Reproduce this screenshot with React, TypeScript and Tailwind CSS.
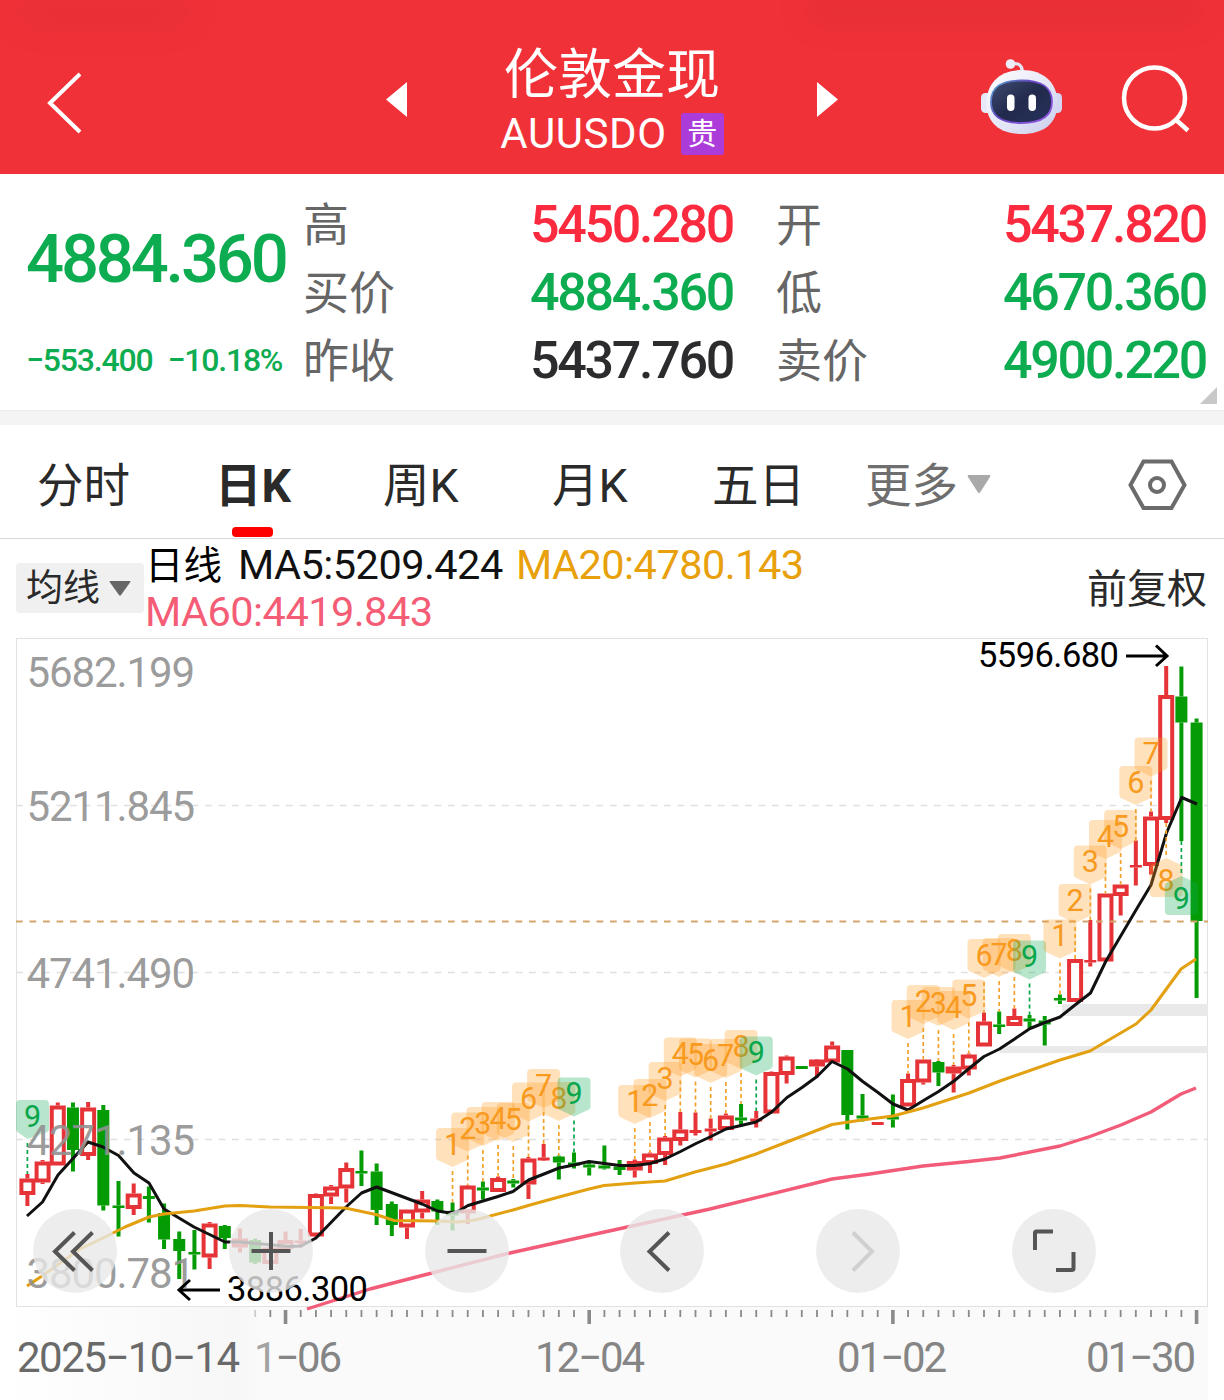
type Candle = [kind: 'r' | 'g', high: number, top: number, bottom: number, low: number];
type Point = [x: number, y: number];

const STEP = 15.184;
const FIRST_X = 27.4;
const candleX = (i: number) => FIRST_X + i * STEP;

const RED = '#e53337';
const GREEN = '#049b04';

const candles: Candle[] = [
  ['r', 1174, 1178.5, 1195, 1206],
  ['r', 1160, 1161.5, 1182.5, 1184],
  ['r', 1102.5, 1105.5, 1165.5, 1165.5],
  ['g', 1102.5, 1107.5, 1150, 1171.5],
  ['r', 1102, 1107.5, 1156, 1160],
  ['g', 1105, 1110, 1205.5, 1210.5],
  ['g', 1181, 1205.5, 1208, 1236.5],
  ['r', 1183.5, 1193.5, 1209, 1215],
  ['g', 1186.5, 1196, 1199, 1222.5],
  ['g', 1203.5, 1213, 1239.5, 1249],
  ['g', 1231.5, 1239, 1251, 1279],
  ['g', 1230, 1252, 1254.5, 1269.5],
  ['r', 1222, 1223.5, 1257.5, 1269],
  ['g', 1225, 1226, 1238, 1249],
  ['r', 1228.5, 1238.5, 1247.5, 1252.5],
  ['g', 1238.5, 1240, 1262.5, 1264],
  ['r', 1245, 1247.5, 1264, 1264],
  ['r', 1231.5, 1240, 1249, 1251.5],
  ['r', 1229, 1240.5, 1243, 1247.5],
  ['r', 1193.5, 1194, 1236.5, 1237],
  ['r', 1185, 1186.5, 1196.5, 1204],
  ['r', 1162.5, 1168, 1188.5, 1202.5],
  ['g', 1150.5, 1171, 1173.5, 1186],
  ['g', 1163.5, 1171.5, 1210, 1225],
  ['g', 1201.5, 1204, 1225, 1236],
  ['r', 1209.5, 1209.5, 1227.5, 1239],
  ['r', 1191, 1199.5, 1212.5, 1218.5],
  ['g', 1199.5, 1201, 1211.5, 1225],
  ['g', 1202.5, 1212.5, 1215.5, 1230.5],
  ['r', 1185, 1185.5, 1213.5, 1224],
  ['g', 1181.5, 1187.5, 1190.5, 1199.5],
  ['r', 1176.5, 1178, 1192, 1192],
  ['g', 1179, 1180.5, 1183.5, 1187.5],
  ['r', 1157, 1158.5, 1184.5, 1199],
  ['r', 1144, 1157.5, 1160.5, 1161],
  ['g', 1155.5, 1156.5, 1162.5, 1179.5],
  ['g', 1152.5, 1162.5, 1165.5, 1168.5],
  ['g', 1163, 1164.5, 1167.5, 1175.5],
  ['g', 1145.5, 1165.5, 1168.5, 1169.5],
  ['g', 1160, 1166.5, 1170, 1175],
  ['r', 1159.5, 1161, 1170.5, 1177.5],
  ['r', 1152.5, 1153.5, 1164, 1173],
  ['r', 1136, 1137.5, 1155, 1165],
  ['r', 1112, 1129.5, 1141, 1145.5],
  ['r', 1112.5, 1130, 1133, 1135.5],
  ['r', 1118.5, 1128.5, 1131.5, 1140.5],
  ['r', 1113.5, 1115.5, 1130, 1130],
  ['g', 1104, 1117.5, 1120.5, 1126.5],
  ['r', 1111, 1118.5, 1121.5, 1127.5],
  ['r', 1071.5, 1072, 1113.5, 1113.5],
  ['r', 1055.5, 1056.5, 1075, 1083.5],
  ['g', 1066, 1066, 1069, 1069],
  ['r', 1059, 1059.5, 1066.5, 1077.5],
  ['r', 1041.5, 1045.5, 1062.5, 1062.5],
  ['g', 1050, 1050, 1115, 1129.5],
  ['g', 1094, 1115.5, 1118.5, 1121.5],
  ['r', 1122, 1122, 1125, 1125],
  ['g', 1094.5, 1116.5, 1119.5, 1127.5],
  ['r', 1073.5, 1079, 1106.5, 1106.5],
  ['r', 1059.5, 1059.5, 1082.5, 1084.5],
  ['g', 1061, 1062, 1072.5, 1086],
  ['r', 1065, 1066.5, 1073.5, 1092.5],
  ['r', 1053.5, 1054.5, 1069.5, 1075.5],
  ['r', 1012.5, 1021.5, 1046.5, 1046.5],
  ['g', 1011.5, 1024.5, 1027, 1034],
  ['r', 1008.5, 1016, 1026, 1026],
  ['g', 1015, 1018.5, 1021.5, 1028.5],
  ['g', 1016, 1020.5, 1024.5, 1045.5],
  ['g', 994.5, 998, 1000.5, 1004],
  ['r', 959, 959, 1002, 1002],
  ['r', 920, 960, 962.5, 966.5],
  ['r', 893.5, 893.5, 961.5, 961.5],
  ['r', 884.5, 884.5, 896, 915.5],
  ['r', 840.5, 865, 867.5, 885.5],
  ['r', 811.5, 816.5, 866, 874.5],
  ['r', 666, 695, 820, 823],
  ['g', 666.5, 696.5, 722.5, 841],
  ['g', 718.5, 722.5, 921, 998],
];

const ma5: Point[] = [
  [27, 1216], [42.5, 1202], [58, 1175], [88, 1142], [103, 1147], [118.5, 1155.5], [134, 1173], [149, 1183],
  [164, 1209], [194, 1227], [225, 1242], [240, 1242], [262, 1244], [290, 1246.5], [301, 1246], [316, 1238],
  [346, 1207], [361.5, 1193], [376.7, 1187], [422, 1204], [437.5, 1211], [447, 1212.5], [457, 1212], [468, 1205.5],
  [498, 1196.5], [513, 1191.5], [528.6, 1180], [544, 1174], [559, 1168], [574, 1165], [589, 1161.5],
  [619.7, 1165.5], [635, 1165.5], [650, 1163.5], [665, 1159], [680.5, 1151.5], [696, 1143.5], [711, 1136.5],
  [726, 1129], [741, 1125.5], [756, 1122], [771.7, 1112], [787, 1097.5], [802, 1087.5], [817, 1076.5],
  [832, 1061.5], [847.6, 1069], [862.7, 1081.5], [878, 1092.5], [893, 1104], [908, 1110], [923.5, 1100.5],
  [938.6, 1091.5], [954, 1081], [969, 1068.5], [984, 1056.5], [999.5, 1049], [1014.6, 1039], [1030, 1028.5],
  [1045, 1022.5], [1060, 1017], [1075, 1005], [1090.5, 993], [1105.7, 961.5], [1121, 935.5], [1136, 910],
  [1151, 885], [1166.5, 833], [1181.7, 797.5], [1197, 804],
];

const ma20: Point[] = [
  [27, 1286], [42, 1276], [80, 1249], [103, 1238], [125, 1227], [149, 1217], [164, 1214], [194, 1211], [225, 1206],
  [240, 1205.5], [270, 1207], [310, 1207.5], [345, 1208], [376, 1214.5], [394, 1220.5], [437, 1221], [459, 1222],
  [475, 1220], [513, 1210], [530, 1205], [559, 1197], [589, 1189], [604, 1185.5], [635, 1183], [665, 1181],
  [695, 1172], [726, 1164], [756, 1154], [787, 1142], [832, 1124.5], [862, 1120], [893, 1116], [923, 1108],
  [969, 1093], [1000, 1081], [1060, 1060], [1090, 1051], [1136, 1024], [1151, 1010], [1181, 969], [1196, 959],
];

const ma60: Point[] = [
  [307, 1309], [370, 1289], [430, 1273.5], [510, 1253], [600, 1233], [710, 1209], [832, 1179], [870, 1174],
  [923, 1166], [969, 1161.5], [1000, 1158], [1060, 1146], [1090, 1136.5], [1121, 1125], [1151, 1112],
  [1181, 1094], [1196, 1088],
];

// [candle index, digit, top of the tag]
const tags: [number, number, number][] = [
  [28, 1, 1128], [29, 2, 1112.5], [30, 3, 1107], [31, 4, 1102], [32, 5, 1103], [33, 6, 1082.5], [34, 7, 1069],
  [35, 8, 1082], [36, 9, 1077.5],
  [40, 1, 1085], [41, 2, 1079], [42, 3, 1062], [43, 4, 1037.5], [44, 5, 1038.5], [45, 6, 1044], [46, 7, 1039],
  [47, 8, 1030], [48, 9, 1036.5],
  [58, 1, 1000], [59, 2, 985], [60, 3, 987], [61, 4, 991], [62, 5, 979.5], [63, 6, 939], [64, 7, 938],
  [65, 8, 934], [66, 9, 940.5],
  [68, 1, 919.5], [69, 2, 884], [70, 3, 845.5], [71, 4, 820], [72, 5, 810], [73, 6, 766], [74, 7, 737.5],
];

const priceLabels = [
  { text: '5682.199', y: 687 },
  { text: '5211.845', y: 820.5 },
  { text: '4741.490', y: 987.5 },
  { text: '4271.135', y: 1154.5 },
  { text: '3800.781', y: 1287.5 },
];

const toPoints = (pts: Point[]) => pts.map((p) => p.join(',')).join(' ');

function CandleShape({ index, data }: { index: number; data: Candle }) {
  const [kind, high, top, bottom, low] = data;
  const x = candleX(index);
  const color = kind === 'r' ? RED : GREEN;
  const hollow = kind === 'r' && bottom - top > 5;

  return (
    <g>
      {top > high && <rect x={x - 2} y={high} width={4} height={top - high} fill={color} />}
      {low > bottom && <rect x={x - 2} y={bottom} width={4} height={low - bottom} fill={color} />}
      {hollow ? (
        <rect x={x - 6} y={top + 2} width={12} height={bottom - top - 4} fill="#fff" stroke={color} strokeWidth={4} />
      ) : (
        <rect x={x - 6} y={top} width={12} height={bottom - top} fill={color} />
      )}
    </g>
  );
}

interface TagProps {
  x: number;
  digit: number;
  top: number;
  target: number;
  inverted?: boolean;
  // the first tag is pushed right so that it stays inside the frame
  shift?: number;
}

function Tag({ x, digit, top, target, inverted, shift = 0 }: TagProps) {
  const last = digit === 9;
  const fill = last ? '#12ab58' : '#ff9a20';
  const textColor = last ? '#0aa64b' : '#f79a1e';
  const cx = x + shift;
  const shape = inverted
    ? `M${cx} ${top} l15 7 q1.500 1 1.500 3 v25 q0 4-4 4 h-25 q-4 0-4-4 v-25 q0-2 1.500-3z`
    : `M${cx - 12.5} ${top} h25 q4 0 4 4 v25 q0 2-1.500 3 L${x} ${top + 39} L${cx - 15} ${top + 32} q-1.500-1-1.500-3 v-25 q0-4 4-4z`;

  return (
    <g>
      <line
        x1={x}
        x2={x}
        y1={inverted ? target : top + 43}
        y2={inverted ? top : target}
        stroke={last ? '#0aa64b' : '#f2a22c'}
        strokeWidth={1.7}
        strokeDasharray="4 3"
      />
      <path d={shape} fill={fill} fillOpacity={0.3} />
      <text x={cx} y={inverted ? top + 33 : top + 26.5} textAnchor="middle" fontSize={30.5} fill={textColor}>
        {digit}
      </text>
    </g>
  );
}

function Chart() {
  return (
    <svg className="block overflow-visible" width={1224} height={762} viewBox="0 638 1224 762" fontFamily="Roboto, 'Noto Sans CJK SC', sans-serif">
      <defs>
        <linearGradient id="fade" x1="0" x2="1" y1="0" y2="0">
          <stop offset="0" stopColor="#fff" />
          <stop offset="0.9" stopColor="#f7f7f7" />
          <stop offset="1" stopColor="#fafafa" />
        </linearGradient>
      </defs>
      <rect x={0} y={1307} width={1208} height={93} fill="#fafafa" />
      <rect x={0} y={1307} width={262} height={93} fill="url(#fade)" />
      <rect x={16.5} y={638.5} width={1191} height={668} fill="#fff" stroke="#e2e2e2" />
      {[805.5, 972.5, 1139.5].map((y) => (
        <line key={y} x1={16} x2={1208} y1={y} y2={y} stroke="#e0e0e0" strokeWidth={1.3} strokeDasharray="6.75 6.75" />
      ))}
      <rect x={1062} y={1004} width={146} height={12} fill="#e9e9e9" />
      <rect x={1000} y={1046} width={208} height={7} fill="#e9e9e9" />

      {candles.map((c, i) => (
        <CandleShape key={i} index={i} data={c} />
      ))}
      <line x1={16} x2={1208} y1={921.5} y2={921.5} stroke="#d3a56c" strokeWidth={2} strokeDasharray="6.75 6.75" />

      <g fill="none" strokeWidth={3} strokeLinejoin="round">
        <polyline points={toPoints(ma60)} stroke="#f25c78" strokeWidth={3.4} />
        <polyline points={toPoints(ma5)} stroke="#111" />
        <polyline points={toPoints(ma20)} stroke="#e3a010" />
      </g>

      <Tag x={candleX(0)} digit={9} top={1100} target={1174} shift={5.1} />
      {tags.map(([i, digit, top]) => (
        <Tag key={i} x={candleX(i)} digit={digit} top={top} target={candles[i][1]} />
      ))}
      <Tag x={candleX(75)} digit={8} top={858} target={823} inverted />
      <Tag x={candleX(76)} digit={9} top={876} target={841} inverted />

      <g fontSize={42} fill="#929292" fillOpacity={0.92}>
        {priceLabels.map((l) => (
          <text key={l.text} x={26.5} y={l.y} textLength={168.5}>
            {l.text}
          </text>
        ))}
      </g>

      <g fontSize={34.5} fill="#000">
        <text x={978} y={667} textLength={141}>5596.680</text>
        <text x={227} y={1301} textLength={141}>3886.300</text>
      </g>
      <g fill="none" stroke="#000" strokeWidth={3}>
        <path d="M1126 656 H1166 M1156 645.500 L1167 656 L1156 666" />
        <path d="M220 1290 H180 M190 1280 L179 1290 L190 1300" />
      </g>

      {/* time axis */}
      {Array.from({ length: 63 }, (_, k) => k + 15).map((i) => {
        const major = (i - 17) % 20 === 0;
        return (
          <rect
            key={i}
            x={candleX(i) - (major ? 1.8 : 0.9)}
            y={1310}
            width={major ? 3.6 : 1.8}
            height={major ? 14 : 7}
            fill="#8a8a8a"
            opacity={i === 15 ? 0.4 : 1}
          />
        );
      })}
      <g fontSize={42} fill="#858585">
        <text x={254} y={1372} textLength={88}>
          <tspan fill="#a2a2a2">1</tspan>−06
        </text>
        <text x={535} y={1372} textLength={110}>12−04</text>
        <text x={837} y={1372} textLength={110}>01−02</text>
        <text x={1086} y={1372} textLength={110}>01−30</text>
        <text x={17} y={1372} textLength={223} fill="#6a6a6a">2025−10−14</text>
      </g>
    </svg>
  );
}

const controls = [
  { id: 'rewind', d: 'M41.500 23.500 L22 42.500 L41.500 61.500 M59.500 23.500 L40 42.500 L59.500 61.500', color: '#555' },
  { id: 'zoom-in', d: 'M22.500 42 H61.500 M42 23 V61', color: '#555' },
  { id: 'zoom-out', d: 'M22.500 42 H61.500', color: '#555' },
  { id: 'prev', d: 'M49 23.500 L29.500 42.500 L49 61.500', color: '#555' },
  { id: 'next', d: 'M37 23.500 L56 42.500 L37 61.500', color: '#d0d0d0' },
  { id: 'fullscreen', d: 'M23 41 V24 Q23 22.500 24.500 22.500 H41 M44 61 H60 Q61.500 61 61.500 59.500 V43', color: '#555' },
];

function Controls() {
  return (
    <div className="absolute left-[33px] top-[571px] flex gap-[111.8px]">
      {controls.map((c) => (
        <button key={c.id} className="size-[84px] shrink-0 rounded-full bg-[#e8e8e8]/80">
          <svg width={84} height={84} fill="none" stroke={c.color} strokeWidth={4}>
            <path d={c.d} />
          </svg>
        </button>
      ))}
    </div>
  );
}

function Robot() {
  return (
    <svg width={84} height={80} viewBox="0 0 84 80">
      <defs>
        <linearGradient id="shell" x1="0" x2="1" y1="0" y2="1">
          <stop offset="0" stopColor="#fff" />
          <stop offset="0.55" stopColor="#e4e6f6" />
          <stop offset="1" stopColor="#c9ccec" />
        </linearGradient>
        <linearGradient id="rim" x1="0" x2="1" y1="0" y2="0.6">
          <stop offset="0" stopColor="#4aa3c0" />
          <stop offset="0.5" stopColor="#6a48c8" />
          <stop offset="1" stopColor="#8a55dd" />
        </linearGradient>
        <linearGradient id="visor" x1="0" x2="1" y1="0" y2="1">
          <stop offset="0" stopColor="#404b70" />
          <stop offset="0.5" stopColor="#222b4d" />
          <stop offset="1" stopColor="#27305a" />
        </linearGradient>
      </defs>
      <path d="M32 9 Q42 7 42.500 17" fill="none" stroke="#e3e3f2" strokeWidth={3.2} />
      <circle cx={30.5} cy={9} r={4.8} fill="#eeeef8" />
      <rect x={1} y={38} width={12} height={20} rx={4.5} fill="#e8e9f8" />
      <rect x={70} y={38} width={12} height={20} rx={4.5} fill="#d5d7f2" />
      <path d="M42 15 C64 15 77.500 28 77.500 48 C77.500 69 63 79 42 79 C21 79 6.500 69 6.500 48 C6.500 28 20 15 42 15Z" fill="url(#shell)" />
      <path d="M41.500 25.500 C62 25.500 72 32 72 47 C72 61 62 68 41.500 68 C21 68 11 61 11 47 C11 32 21 25.500 41.500 25.500Z" fill="url(#visor)" stroke="url(#rim)" strokeWidth={1.8} />
      <rect x={27} y={39.5} width={7.5} height={16.5} rx={3.7} fill="#fff" />
      <rect x={48.5} y={39.5} width={7.5} height={16.5} rx={3.7} fill="#fff" />
    </svg>
  );
}

function Header() {
  return (
    <header className="relative flex h-[174px] items-start overflow-hidden bg-[#f03138] text-white">
      <div className="absolute left-4 top-0 h-7 w-44 rounded-b-3xl bg-[#d82c32]/25 blur-md" />
      <div className="absolute right-5 top-0 h-6 w-[400px] rounded-b-3xl bg-[#d82c32]/35 blur-md" />
      <div className="flex w-[386px] pl-[46px] pt-[71px]">
        <svg width={36} height={64} fill="none" stroke="#fff" strokeWidth={4}>
          <path d="M34 3 L4 32 L34 61" />
        </svg>
      </div>
      <svg className="mt-[82px]" width={21} height={36}>
        <path d="M21 0 V35 L0 17.500Z" fill="#fff" />
      </svg>
      <div className="flex w-[410px] flex-col items-center pt-[41px]">
        <h1 className="text-[54px] leading-[70px]">伦敦金现</h1>
        <div className="mt-px flex items-center">
          <span className="text-[42px] leading-[44px] tracking-[0.6px]">AUUSDO</span>
          <span className="ml-[14px] flex h-[42px] w-[43px] items-center justify-center rounded-[3px] bg-[#ac3cda] text-[30px] leading-none">贵</span>
        </div>
      </div>
      <svg className="mt-[82px]" width={21} height={36}>
        <path d="M0 0 V35 L21 17.500Z" fill="#fff" />
      </svg>
      <div className="ml-[142px] mt-[55px]">
        <Robot />
      </div>
      <svg className="ml-[57px] mt-[64px]" width={70} height={70} fill="none" stroke="#fff" strokeWidth={4.5}>
        <circle cx={33.5} cy={34} r={30.5} />
        <path d="M54 55 L67 66.500" />
      </svg>
    </header>
  );
}

const quotes = [
  [
    { label: '高', value: '5450.280', color: 'text-[#fb2a3e]' },
    { label: '买价', value: '4884.360', color: 'text-[#0dac50]' },
    { label: '昨收', value: '5437.760', color: 'text-[#2c2c2e]' },
  ],
  [
    { label: '开', value: '5437.820', color: 'text-[#fb2a3e]' },
    { label: '低', value: '4670.360', color: 'text-[#0dac50]' },
    { label: '卖价', value: '4900.220', color: 'text-[#0dac50]' },
  ],
];

function Quote() {
  return (
    <section className="relative flex h-[236px] bg-white pt-[17px]">
      <div className="w-[303px] pl-[26px] font-medium text-[#0dac50]">
        <div className="pt-[28px] text-[67px] leading-[80px] tracking-[-3.2px]">4884.360</div>
        <div className="flex gap-[15px] pt-[41px] text-[32px] leading-[40px] tracking-[-1.2px]">
          <span>−553.400</span>
          <span>−10.18%</span>
        </div>
      </div>
      {quotes.map((col, i) => (
        <div key={i} className={i === 0 ? 'w-[430px]' : 'ml-[43px] w-[430px]'}>
          {col.map((q) => (
            <div key={q.label} className="flex h-[68px] items-center justify-between">
              <span className="text-[46px] leading-none text-[#666]">{q.label}</span>
              <span className={`text-[52px] font-medium leading-none tracking-[-2.3px] ${q.color}`}>{q.value}</span>
            </div>
          ))}
        </div>
      ))}
      <svg className="absolute bottom-[6px] right-[7px]" width={17} height={17}>
        <path d="M17 0 V17 H0Z" fill="#c8c8c8" />
      </svg>
    </section>
  );
}

function Tabs() {
  return (
    <nav className="flex h-[114px] items-start border-b border-[#d9d9d9] bg-white pl-[37px] pt-[31px] text-[46.5px] leading-[60px] text-[#2a2a2a]">
      <span className="w-[178px]">分时</span>
      <span className="relative w-[168px] font-bold">
        日K
        <i className="absolute left-[17px] top-[71px] h-[10px] w-[41px] rounded-[4px] bg-[#fe0000]" />
      </span>
      <span className="w-[169px]">周K</span>
      <span className="w-[160px]">月K</span>
      <span className="w-[153px]">五日</span>
      <span className="flex w-[263px] items-center text-[#6e6e6e]">
        更多
        <svg className="-mt-1 ml-[9px]" width={24} height={19}>
          <path d="M1.500 0 H22.500 Q24 0 23 2 L13 17.500 Q12 19 11 17.500 L1 2 Q0 0 1.500 0Z" fill="#a9a9a9" />
        </svg>
      </span>
      <svg className="mt-[3px]" width={60} height={52} fill="none" stroke="#6b6b6b" strokeWidth={4}>
        <path d="M15.500 2.500 H43.500 L56.500 26 L43.500 49 H15.500 L2.500 26Z" />
        <circle cx={29} cy={26} r={7} />
      </svg>
    </nav>
  );
}

function MaBar() {
  return (
    <div className="flex h-[99px] items-start bg-white pl-4 pr-[17px]">
      <button className="mt-6 flex h-[50px] w-[128px] shrink-0 items-center rounded-[4px] bg-[#f0f0f0] pl-[10px] text-[37px] leading-none text-[#2a2a2a]">
        均线
        <svg className="ml-[9px] mt-[2px]" width={22} height={16}>
          <path d="M1 0 H21 Q22 0 21 1.500 L12 14 Q11 15.500 10 14 L1 1.500 Q0 0 1 0Z" fill="#666" />
        </svg>
      </button>
      <div className="flex-1 pl-px text-[41.5px] leading-[47px] tracking-[-0.55px]">
        <div className="flex pt-[2px]">
          <span className="w-[93px] pt-[2px] text-[38.5px] leading-[45px] tracking-normal">日线</span>
          <span className="w-[278px] text-[#111]">MA5:5209.424</span>
          <span className="text-[#e8a00c]">MA20:4780.143</span>
        </div>
        <div className="text-[#f55c76]">MA60:4419.843</div>
      </div>
      <span className="mt-[22px] text-[40px] leading-[58px] text-[#2a2a2a]">前复权</span>
    </div>
  );
}

export default function App() {
  return (
    <div className="h-[1400px] w-[1224px] overflow-hidden bg-white font-[Roboto,'Noto_Sans_CJK_SC',sans-serif]">
      <Header />
      <Quote />
      <div className="h-[15px] border-t border-[#ececec] bg-[#f4f4f4]" />
      <Tabs />
      <MaBar />
      <div className="relative">
        <Chart />
        <Controls />
      </div>
    </div>
  );
}
